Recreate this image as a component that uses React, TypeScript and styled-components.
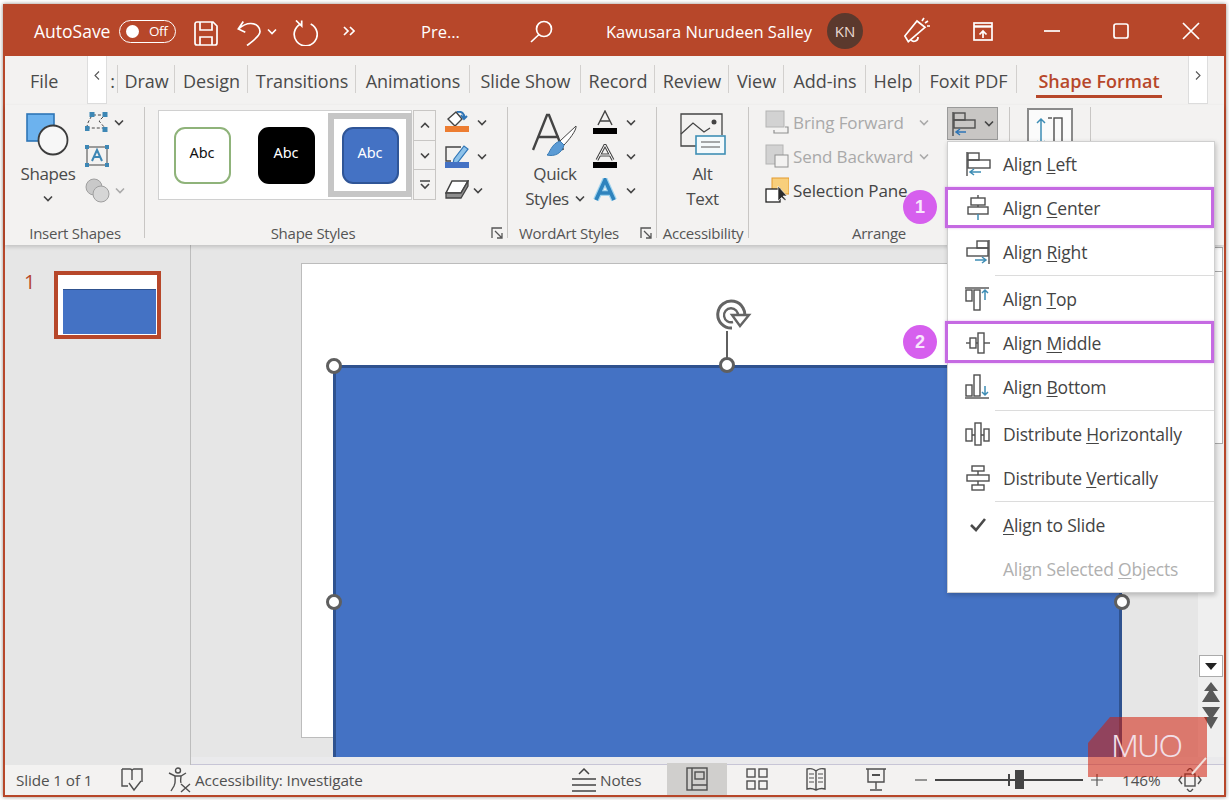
import React from "react";
import styled, { createGlobalStyle } from "styled-components";

const FONT = `"Open Sans", "Noto Sans", "Liberation Sans", sans-serif`;
const BRICK = "#B7472A";
const INK = "#444444";
const MUTED = "#A9A9A9";
const BLUE = "#4472C4";
const ARROW = "#3E8DB5";

const Global = createGlobalStyle`
  html, body { margin: 0; padding: 0; background: #fff; }
  body { font-family: ${FONT}; color: ${INK}; overflow: hidden; }
  * { box-sizing: border-box; }
  u { text-underline-offset: 2px; text-decoration-thickness: 1px; }
`;

const Page = styled.div`
  position: relative;
  width: 1229px;
  height: 800px;
  padding: 4px 3px 3px;
  overflow: hidden;
`;
const Win = styled.div`
  height: 793px;
  border: 2px solid ${BRICK};
  display: flex;
  flex-direction: column;
  background: #f3f2f1;
  box-shadow: 0 0 4px rgba(60, 40, 30, 0.55);
`;

/* ---------- title bar ---------- */
const TitleBar = styled.header`
  height: 50px;
  flex: none;
  background: ${BRICK};
  color: #fff;
  display: flex;
  align-items: center;
  font-size: 16.5px;
  white-space: nowrap;
`;
const Slot = styled.div<{ $w: number; $ml?: number; $center?: boolean; $pt?: number }>`
  width: ${(p) => p.$w}px;
  margin-left: ${(p) => p.$ml ?? 0}px;
  padding-top: ${(p) => p.$pt ?? 0}px;
  flex: none;
  display: flex;
  align-items: center;
  justify-content: ${(p) => (p.$center ? "center" : "flex-start")};
`;
const AppLabel = styled(Slot)`
  font-size: 17.5px;
`;
const Toggle = styled.div`
  width: 57px;
  height: 23px;
  border: 1.5px solid #fff;
  border-radius: 12px;
  display: flex;
  align-items: center;
  padding-left: 6px;
  font-size: 13.5px;
  letter-spacing: -0.4px;
`;
const ToggleDot = styled.span`
  width: 13px;
  height: 13px;
  border-radius: 50%;
  background: #fff;
  margin-right: 10px;
`;
const Avatar = styled.div`
  width: 36px;
  height: 36px;
  border-radius: 50%;
  background: #5b392d;
  color: #ead9d2;
  font-size: 15px;
  display: flex;
  align-items: center;
  justify-content: center;
`;

/* ---------- tabs ---------- */
const TabRow = styled.nav`
  height: 49px;
  flex: none;
  display: flex;
  align-items: stretch;
  font-size: 18px;
  letter-spacing: -0.04px;
  color: #4a4a4a;
  background: #f3f2f1;
  white-space: nowrap;
`;
const FileTab = styled.div`
  width: 82px;
  padding-left: 25px;
  display: flex;
  align-items: center;
  padding-top: 1px;
`;
const Scroller = styled.div<{ $ml?: number }>`
  width: 20px;
  height: 48px;
  margin-left: ${(p) => p.$ml ?? 0}px;
  background: #fff;
  border: 1px solid #dddddd;
  border-top: 0;
  display: flex;
  align-items: center;
  justify-content: center;
  padding-bottom: 8px;
  position: relative;
`;
const Tab = styled.div<{ $w: number }>`
  width: ${(p) => p.$w}px;
  display: flex;
  align-items: center;
  justify-content: center;
  position: relative;
  padding-top: 1px;
  &::after {
    content: "";
    position: absolute;
    right: 0;
    top: 9px;
    height: 28px;
    width: 1px;
    background: #d2d0ce;
  }
`;
const ActiveTab = styled.div`
  margin: 0 0 7px 19px;
  width: 126px;
  height: 42px;
  padding-top: 11px;
  border-bottom: 3px solid ${BRICK};
  color: ${BRICK};
  font-weight: 600;
  display: flex;
  align-items: center;
  justify-content: center;
  letter-spacing: 0;
`;

/* ---------- ribbon ---------- */
const Ribbon = styled.section`
  height: 140px;
  flex: none;
  padding-top: 2px;
  display: flex;
  background: #f3f2f1;
  position: relative;
  z-index: 2;
  box-shadow: 0 2px 4px rgba(0, 0, 0, 0.16);
  font-size: 17px;
  letter-spacing: -0.35px;
  white-space: nowrap;
`;
const Group = styled.div<{ $w: number }>`
  width: ${(p) => p.$w}px;
  height: 138px;
  flex: none;
  position: relative;
  display: flex;
  flex-direction: column;
  &::after {
    content: "";
    position: absolute;
    right: 0;
    top: 0;
    width: 1px;
    height: 131px;
    background: #c8c6c4;
  }
`;
const GroupBody = styled.div`
  flex: 1;
  min-height: 0;
  display: flex;
  align-items: flex-start;
`;
const GroupLabel = styled.div<{ $pr?: number }>`
  height: 24px;
  flex: none;
  padding-right: ${(p) => p.$pr ?? 0}px;
  display: flex;
  align-items: center;
  justify-content: center;
  font-size: 15px;
  letter-spacing: -0.25px;
  color: #555;
`;
const Launcher = styled.span`
  position: absolute;
  right: 5px;
  bottom: 6px;
  display: flex;
`;
const Large = styled.div<{ $w: number; $ml?: number }>`
  width: ${(p) => p.$w}px;
  margin-left: ${(p) => p.$ml ?? 0}px;
  flex: none;
  display: flex;
  flex-direction: column;
  align-items: center;
  color: #4a4a4a;
`;
const LargeIcon = styled.div`
  height: 54px;
  display: flex;
  align-items: flex-start;
  padding-top: 6px;
`;
const LargeLine = styled.div`
  height: 25px;
  display: flex;
  align-items: center;
  gap: 6px;
`;
const SmallCol = styled.div<{ $ml?: number }>`
  margin: -2px 0 0 ${(p) => p.$ml ?? 0}px;
  display: flex;
  flex-direction: column;
`;
const SmallRow = styled.div<{ $gap?: number }>`
  height: 34px;
  display: flex;
  align-items: center;
  gap: ${(p) => p.$gap ?? 6}px;
`;
const Gallery = styled.div`
  margin: 3px 0 0 13px;
  width: 254px;
  height: 90px;
  padding-left: 1px;
  background: #fff;
  border: 1px solid #d0d0d0;
  display: flex;
  align-items: center;
`;
const Style = styled.div<{ $sel?: boolean }>`
  width: 84px;
  height: 84px;
  flex: none;
  display: flex;
  align-items: center;
  justify-content: center;
  border: ${(p) => (p.$sel ? "6px solid #c6c6c6" : "0")};
`;
const Chip = styled.div<{ $bg: string; $line: string; $fg: string }>`
  width: 57px;
  height: 57px;
  border-radius: 11px;
  background: ${(p) => p.$bg};
  border: 2px solid ${(p) => p.$line};
  color: ${(p) => p.$fg};
  display: flex;
  align-items: center;
  justify-content: center;
  padding-bottom: 6px;
  font-family: "Noto Sans", sans-serif;
  font-size: 14.5px;
  letter-spacing: 0;
`;
const GalleryScroll = styled.div`
  margin: 3px 0 0 1px;
  width: 23px;
  height: 90px;
  display: flex;
  flex-direction: column;
  border: 1px solid #c8c6c4;
`;
const GalleryBtn = styled.div`
  flex: 1;
  display: flex;
  align-items: center;
  justify-content: center;
  & + & {
    border-top: 1px solid #c8c6c4;
  }
`;
const ArrangeCol = styled.div`
  width: 198px;
  flex: none;
  margin-top: -2px;
  padding-left: 16px;
  display: flex;
  flex-direction: column;
`;
const ArrangeRow = styled.div<{ $off?: boolean }>`
  height: 34px;
  display: flex;
  align-items: center;
  color: ${(p) => (p.$off ? MUTED : "#444")};
`;
const ArrangeText = styled.span`
  width: 126px;
  margin-left: 4px;
  flex: none;
  position: relative;
  letter-spacing: -0.1px;
`;
const AlignBtn = styled.div`
  width: 51px;
  height: 33px;
  flex: none;
  background: #c8c6c4;
  border: 1px solid #9a9a9a;
  display: flex;
  align-items: center;
  padding-left: 3px;
  gap: 7px;
`;
const HeightBox = styled.div`
  margin: 1px 0 0 17px;
  width: 46px;
  height: 40px;
  border: 2px solid #8a8a8a;
  background: #fbfbfb;
  display: flex;
  justify-content: center;
  padding-top: 6px;
`;

/* ---------- work area ---------- */
const Work = styled.main`
  flex: 1;
  min-height: 0;
  display: flex;
  background: #e6e6e6;
`;
const ThumbPane = styled.aside`
  width: 186px;
  flex: none;
  border-right: 1px solid #bdbdbd;
  padding: 26px 0 0 19px;
  display: flex;
  align-items: flex-start;
  gap: 16px;
`;
const ThumbNo = styled.span`
  color: ${BRICK};
  font-size: 20px;
  line-height: 22px;
  width: 14px;
`;
const Thumb = styled.div`
  width: 107px;
  height: 68px;
  border: 4px solid ${BRICK};
  background: #fff;
  padding: 14px 1px 1px 5px;
  display: flex;
`;
const ThumbShape = styled.div`
  flex: 1;
  background: ${BLUE};
  border-top: 1px solid #2f528f;
`;
const Editor = styled.div`
  flex: 1;
  min-width: 0;
  display: flex;
  flex-direction: column;
`;
const EditorTop = styled.div`
  flex: 1;
  min-height: 0;
  display: flex;
`;
const Viewport = styled.div`
  flex: 1;
  min-width: 0;
  position: relative;
  overflow: hidden;
`;
const Slide = styled.div`
  position: absolute;
  left: 110px;
  top: 18px;
  width: 790px;
  height: 475px;
  background: #fff;
  border: 1px solid #bcbcbc;
`;
const Shape = styled.div`
  position: absolute;
  left: 142px;
  top: 120px;
  width: 789px;
  height: 420px;
  background: ${BLUE};
  border: 3px solid #2f528f;
`;
const Handle = styled.span<{ $x: number; $y: number }>`
  position: absolute;
  left: ${(p) => p.$x - 8}px;
  top: ${(p) => p.$y - 8}px;
  width: 16px;
  height: 16px;
  border-radius: 50%;
  background: #fff;
  border: 3px solid #5f5f5f;
  z-index: 1;
`;
const Stem = styled.span`
  position: absolute;
  left: 535px;
  top: 86px;
  width: 2px;
  height: 34px;
  background: #5f5f5f;
`;
const RotateSpot = styled.span`
  position: absolute;
  left: 521px;
  top: 54px;
  display: flex;
`;
const VScroll = styled.div`
  width: 26px;
  flex: none;
  background: #efefef;
  display: flex;
  flex-direction: column;
  align-items: center;
  padding-top: 2px;
`;
const VBtn = styled.div`
  width: 24px;
  height: 25px;
  flex: none;
  background: #fff;
  border: 1px solid #ababab;
  display: flex;
  align-items: center;
  justify-content: center;
`;
const VThumb = styled.div`
  width: 24px;
  height: 172px;
  flex: none;
  background: #fff;
  border: 1px solid #ababab;
  border-top: 0;
  margin-bottom: 211px;
`;
const VDown = styled(VBtn)`
  height: 22px;
`;
const VJump = styled.div`
  margin-top: 5px;
  flex: none;
  display: flex;
`;
const HStrip = styled.div`
  height: 8px;
  flex: none;
  background: #eaeaec;
  border-bottom: 1px solid #c7c5d6;
`;

/* ---------- status bar ---------- */
const StatusBar = styled.footer`
  height: 30px;
  flex: none;
  background: #f3f2f1;
  display: flex;
  align-items: center;
  font-size: 15.3px;
  letter-spacing: -0.12px;
  color: #505050;
  white-space: nowrap;
`;
const ViewBtn = styled.div<{ $on?: boolean; $ml?: number }>`
  width: ${(p) => (p.$on ? 60 : 40)}px;
  height: 32px;
  margin-top: -2px;
  margin-left: ${(p) => p.$ml ?? 0}px;
  flex: none;
  background: ${(p) => (p.$on ? "#d0cfcd" : "transparent")};
  display: flex;
  align-items: center;
  justify-content: center;
`;
const ZoomTrack = styled.div`
  width: 148px;
  height: 2px;
  margin-left: 8px;
  flex: none;
  background: #444;
  position: relative;
`;
const ZoomTick = styled.span`
  position: absolute;
  left: 73px;
  top: -5px;
  width: 2px;
  height: 12px;
  background: #444;
`;
const ZoomThumb = styled.span`
  position: absolute;
  left: 80px;
  top: -9px;
  width: 9px;
  height: 19px;
  background: #444;
`;

/* ---------- menu ---------- */
const Menu = styled.div`
  position: absolute;
  left: 947px;
  top: 141px;
  width: 268px;
  height: 452px;
  background: #fff;
  border: 1px solid #cfcfcf;
  box-shadow: 1px 2px 5px rgba(0, 0, 0, 0.22);
  z-index: 5;
  font-size: 17.5px;
  letter-spacing: -0.2px;
  color: #444;
  white-space: nowrap;
`;
const MenuRow = styled.div<{ $off?: boolean; $sep?: boolean }>`
  position: relative;
  height: 44px;
  display: flex;
  align-items: center;
  color: ${(p) => (p.$off ? "#b0b0b0" : "#444")};
  margin-bottom: ${(p) => (p.$sep ? 3 : 0)}px;
  &::before {
    content: ${(p) => (p.$sep ? '""' : "none")};
    position: absolute;
    left: 47px;
    right: 0;
    bottom: -2px;
    height: 1px;
    background: #dcdcdc;
  }
`;
const MenuIcon = styled.span`
  width: 55px;
  flex: none;
  display: flex;
  justify-content: center;
  padding-left: 5px;
`;
const Highlight = styled.span<{ $top: number; $bottom: number }>`
  position: absolute;
  left: -3px;
  right: 0;
  top: ${(p) => p.$top}px;
  bottom: ${(p) => p.$bottom}px;
  border: 3px solid #c56ae2;
  box-shadow: 0 0 2px rgba(197, 106, 226, 0.5);
`;
const Badge = styled.span`
  position: absolute;
  left: -45px;
  top: 4px;
  width: 34px;
  height: 34px;
  border-radius: 50%;
  background: #d65fee;
  color: #f8e6fc;
  font-family: "Liberation Sans", sans-serif;
  font-size: 18px;
  font-weight: 700;
  display: flex;
  align-items: center;
  justify-content: center;
  letter-spacing: 0;
`;

/* ---------- watermark ---------- */
const Mark = styled.div`
  position: absolute;
  left: 1088px;
  top: 717px;
  width: 120px;
  height: 60px;
  z-index: 4;
`;
const MarkText = styled.span`
  position: absolute;
  left: 23px;
  top: 6px;
  font-family: "Noto Sans", sans-serif;
  font-weight: 300;
  font-size: 32px;
  line-height: 44px;
  letter-spacing: -1.8px;
  color: #f2dfe6;
`;

/* ---------- drawings ---------- */
type S = { children: React.ReactNode; w: number; h: number };
const Ico = ({ children, w, h }: S) => (
  <svg width={w} height={h} viewBox={`0 0 ${w} ${h}`} fill="none" style={{ display: "block", flex: "none" }}>
    {children}
  </svg>
);
const Chev = ({ c = "#444", dir = "down" }: { c?: string; dir?: "down" | "up" }) => (
  <Ico w={10} h={7}>
    <path d={dir === "up" ? "M1 5.5 5 1.5 9 5.5" : "M1 1.5 5 5.5 9 1.5"} stroke={c} strokeWidth={1.6} />
  </Ico>
);
const SideChev = ({ right }: { right?: boolean }) => (
  <Ico w={6} h={9}>
    <path d={right ? "M1 .5 5 4.500 1 8.500" : "M5 .5 1 4.500 5 8.500"} stroke="#555" strokeWidth={1.1} />
  </Ico>
);
const W = { stroke: "#fff", strokeWidth: 1.7 };
const SaveIc = () => (
  <Ico w={24} h={25}>
    <path d="M3 1h16l4 4v17a2 2 0 0 1-2 2H3a2 2 0 0 1-2-2V3a2 2 0 0 1 2-2Z" {...W} />
    <path d="M6 1v8h12V1M6 24v-8h12v8" {...W} />
  </Ico>
);
const UndoIc = () => (
  <Ico w={24} h={25}>
    <path d="M6.300.5 1.300 8l7 3.300M1.300 8C6 4 10 2.300 14 2.500c6 .3 9 4 9 8 0 5-8 10-13 14" {...W} />
  </Ico>
);
const RedoIc = () => (
  <Ico w={25} h={26}>
    <path d="M7.700 4A11.500 11.500 0 1 0 17.700 4" {...W} />
    <path d="M3 .5 8.700 6V.5" {...W} />
  </Ico>
);
const MoreIc = () => (
  <Ico w={12} h={10}>
    <path d="M1 1l4 4-4 4M7 1l4 4-4 4" {...W} />
  </Ico>
);
const SearchIc = () => (
  <Ico w={23} h={23}>
    <circle cx="14" cy="9" r="7.500" {...W} />
    <path d="M9 14.500 1 22" {...W} />
  </Ico>
);
const MegaphoneIc = () => (
  <Ico w={26} h={30}>
    <path d="M13 5 21 11.300 4.300 25.700 0.800 20Z" {...W} />
    <path d="M7 24a4 4 0 0 0 7-3" {...W} />
    <path d="M18 5l2-3M21 7l3-2M23 10h3" {...W} />
  </Ico>
);
const ShareIc = () => (
  <Ico w={20} h={19}>
    <rect x="1" y="1" width="18" height="17" {...W} />
    <path d="M1 4.500h18" stroke="#fff" strokeWidth={2.4} />
    <path d="M10 16V9M6.500 12.500 10 9l3.500 3.500" {...W} />
  </Ico>
);
const ShapesIc = () => (
  <Ico w={44} h={44}>
    <rect x="1" y="1" width="27" height="27" fill="#6cb2ee" stroke="#2e75b6" strokeWidth={1.6} />
    <circle cx="27" cy="27" r="14.500" fill="#f7f7f7" stroke="#3c3c3c" strokeWidth={1.8} />
  </Ico>
);
const node = "#3d87b5";
const EditIc = () => (
  <Ico w={24} h={20}>
    <path d="M2 16c0-6 3-8 5-13h13l-6 6 6 7Z" stroke="#444" strokeWidth={1} strokeDasharray="3 2" />
    {[[2,16],[7,2],[20,2],[20,17]].map(([x, y], i) => (
      <rect key={i} x={x - 2.5} y={y - 2} width={5} height={5} fill={node} />
    ))}
  </Ico>
);
const TextBoxIc = () => (
  <Ico w={24} h={22}>
    <rect x="2" y="2" width="20" height="18" stroke="#444" strokeWidth={1} />
    <path d="M7 16 12 5l5 11M9 12h6" stroke={node} strokeWidth={2} />
    {[[2,2],[22,2],[2,20],[22,20]].map(([x, y], i) => (
      <rect key={i} x={x - 2} y={y - 2} width={4} height={4} fill={node} />
    ))}
  </Ico>
);
const MergeIc = () => (
  <Ico w={25} h={25}>
    <circle cx="9" cy="9" r="8" fill="#c9c9c9" stroke="#9f9f9f" />
    <circle cx="16" cy="16" r="8" fill="#d6d6d6" stroke="#9f9f9f" />
  </Ico>
);
const FillIc = () => (
  <Ico w={24} h={22}>
    <path d="M11 1 3 8l7 7 7-7Z" fill="#fff" stroke="#444" strokeWidth={1.4} />
    <path d="M12 1c5-1 8 2 7 7M16 4l3 4 3-3" stroke="#2e75b6" strokeWidth={2} />
    <rect x="0" y="15" width="24" height="6" fill="#ed7d31" />
  </Ico>
);
const PenIc = () => (
  <Ico w={24} h={24}>
    <path d="M16 3H1v14h5" stroke="#444" strokeWidth={1.4} />
    <path d="M9 15 19 2l4 3-10 13-5 2Z" fill="#8dc2ea" stroke="#2e75b6" strokeWidth={1.2} />
    <rect x="0" y="18" width="24" height="6" fill="#4472c4" />
  </Ico>
);
const EraserIc = () => (
  <Ico w={24} h={20}>
    <path d="M7 1h16l-7 12H1Z" fill="#fff" stroke="#444" strokeWidth={1.5} />
    <path d="M1 13v5h15l7-12V1l-7 12H1Z" fill="#8e8e8e" stroke="#444" strokeWidth={1.3} />
  </Ico>
);
const QuickIc = () => (
  <Ico w={46} h={46}>
    <path d="M1 37 15 2h2l14 35M7 24h20" stroke="#444" strokeWidth={2.4} />
    <path d="M28 28 44 13c1 4-8 15-12 19Z" fill="#fff" stroke="#444" strokeWidth={1} />
    <path d="M15 42c3-2 4-11 13-14l4 4c-2 8-9 12-17 10Z" fill="#5b9bd5" stroke="#3b7cb5" />
  </Ico>
);
const TextFillIc = () => (
  <Ico w={24} h={24}>
    <path d="M5 15 12 1l7 14M7.500 11h9" stroke="#444" strokeWidth={1.4} />
    <rect y="18" width="24" height="6" fill="#000" />
  </Ico>
);
const TextLineIc = () => (
  <Ico w={24} h={24}>
    <path d="M4 16 12 1l8 15M6.500 11h11" stroke="#444" strokeWidth={3} />
    <path d="M4 16 12 1l8 15M6.500 11h11" stroke="#fff" strokeWidth={1} />
    <rect y="18" width="24" height="6" fill="#000" />
  </Ico>
);
const TextFxIc = () => (
  <Ico w={24} h={24}>
    <path d="M3 22 12 2l9 20M6.500 15h11" stroke="#9fd3ee" strokeWidth={6} />
    <path d="M3 22 12 2l9 20M6.500 15h11" stroke="#2e83bd" strokeWidth={3.600} />
  </Ico>
);
const AltIc = () => (
  <Ico w={46} h={42}>
    <path d="M16 33H1V1h41v21" stroke="#444" strokeWidth={1.3} />
    <path d="M1 21 13 10l11 9 6-4" stroke="#444" strokeWidth={1.3} />
    <circle cx="34" cy="9" r="2.500" fill="#444" />
    <rect x="16" y="23" width="29" height="18" fill="#f4fafc" stroke="#3f8fb5" strokeWidth={1.6} />
    <path d="M21 29h19M21 34h19" stroke="#555" strokeWidth={1.2} />
  </Ico>
);
const ForwardIc = () => (
  <Ico w={24} h={24}>
    <path d="M20 17h3v6H9v-3" stroke="#909090" strokeWidth={1.2} />
    <rect x="1" y="1" width="18" height="16" fill="#d2d2d2" stroke="#b4b4b4" />
  </Ico>
);
const BackwardIc = () => (
  <Ico w={24} h={24}>
    <rect x="1" y="1" width="17" height="19" fill="#d2d2d2" stroke="#b4b4b4" />
    <rect x="10" y="11" width="13" height="12" fill="#f3f2f1" stroke="#909090" />
  </Ico>
);
const SelPaneIc = () => (
  <Ico w={24} h={26}>
    <rect x="7" y="1" width="17" height="16" fill="#f8cf7c" stroke="#e49a2d" />
    <rect x="1" y="12" width="14" height="13" fill="#fff" stroke="#222" strokeWidth={1.3} />
    <path d="M13 9v15l3.500-3.500 3.500 3 1-1-3-3.500h4Z" fill="#2b2b2b" stroke="#fff" strokeWidth={0.6} />
  </Ico>
);
const G = { stroke: "#4f4f4f", strokeWidth: 1.4 };
const A = { stroke: ARROW, strokeWidth: 1.5 };
const AlignLeftIc = () => (
  <Ico w={26} h={26}>
    <path d="M2 1v24" {...G} />
    <rect x="3" y="2" width="11" height="7" {...G} />
    <rect x="3" y="9" width="22" height="8" {...G} />
    <path d="M16 21H5M9 18l-4 3 4 3" {...A} />
  </Ico>
);
const AlignCenterIc = () => (
  <Ico w={26} h={26}>
    <rect x="6" y="3" width="14" height="7" {...G} />
    <rect x="3" y="12" width="20" height="7" {...G} />
    <path d="M13 0v3M13 10v2" {...G} />
    <path d="M13 19v6" {...A} />
  </Ico>
);
const AlignRightIc = () => (
  <Ico w={26} h={26}>
    <path d="M24 1v24" {...G} />
    <rect x="12" y="2" width="11" height="7" {...G} />
    <rect x="2" y="9" width="21" height="8" {...G} />
    <path d="M10 21h11M17 18l4 3-4 3" {...A} />
  </Ico>
);
const AlignTopIc = () => (
  <Ico w={26} h={26}>
    <path d="M0 2h24" {...G} />
    <rect x="1" y="4" width="6" height="11" {...G} />
    <rect x="9" y="4" width="6" height="20" {...G} />
    <path d="M20 14V4M17 7l3-3 3 3" {...A} />
  </Ico>
);
const AlignMiddleIc = () => (
  <Ico w={26} h={26}>
    <path d="M1 13h24" {...G} />
    <rect x="5" y="8" width="6" height="10" fill="#fff" {...G} />
    <rect x="13" y="3" width="6" height="20" fill="#fff" {...G} />
  </Ico>
);
const AlignBottomIc = () => (
  <Ico w={26} h={26}>
    <path d="M0 24h24" {...G} />
    <rect x="1" y="11" width="6" height="11" {...G} />
    <rect x="9" y="1" width="6" height="21" {...G} />
    <path d="M20 12v9M17 18l3 3 3-3" {...A} />
  </Ico>
);
const DistHIc = () => (
  <Ico w={26} h={26}>
    <rect x="1" y="8" width="6" height="12" {...G} />
    <rect x="10" y="2" width="6" height="22" {...G} />
    <rect x="19" y="8" width="5" height="12" {...G} />
    <path d="M7 14h3M16 14h3" {...G} />
  </Ico>
);
const DistVIc = () => (
  <Ico w={26} h={26}>
    <rect x="7" y="1" width="12" height="5" {...G} />
    <rect x="2" y="10" width="22" height="6" {...G} />
    <rect x="7" y="20" width="12" height="5" {...G} />
    <path d="M13 6v4M13 16v4" {...G} />
  </Ico>
);
const CheckIc = () => (
  <Ico w={16} h={14}>
    <path d="M1 7l5 5L15 1" stroke="#4a4a4a" strokeWidth={2.6} />
  </Ico>
);
const AlignBtnIc = () => (
  <Ico w={26} h={26}>
    <path d="M2 1v24" {...G} />
    <rect x="3" y="2" width="11" height="7" {...G} />
    <rect x="3" y="9" width="21" height="8" {...G} />
    <path d="M15 21H5M9 18l-4 3 4 3" stroke="#2e75b6" strokeWidth={1.5} />
  </Ico>
);
const HeightIc = () => (
  <Ico w={28} h={30}>
    <path d="M5 3v26M1 7l4-4 4 4M1 25l4 4 4-4" {...A} />
    <path d="M12 2h4" {...G} />
    <rect x="18" y="2" width="8" height="28" {...G} />
  </Ico>
);
const LauncherIc = () => (
  <Ico w={12} h={12}>
    <path d="M1 11V1h10" stroke="#555" strokeWidth={1.3} />
    <path d="M4 4l7 7M11 6v5H6" stroke="#555" strokeWidth={1.3} />
  </Ico>
);
const SpinDownBar = () => (
  <Ico w={12} h={10}>
    <path d="M1 1h10M2 4l4 4 4-4" stroke="#444" strokeWidth={1.6} />
  </Ico>
);
const RotateIc = () => (
  <Ico w={40} h={34}>
    <path d="M20 29a13.500 13.500 0 1 1 12-9" stroke="#646464" strokeWidth={3} />
    <path d="M21 23a7 7 0 1 1 5-6" stroke="#646464" strokeWidth={2.4} />
    <path d="M20 16h17l-9 11Z" fill="#fff" stroke="#646464" strokeWidth={2.4} />
  </Ico>
);
const TriDown = () => (
  <Ico w={12} h={7}>
    <path d="M0 0h12L6 7Z" fill="#222" />
  </Ico>
);
const JumpUp = () => (
  <Ico w={18} h={20}>
    <path d="M9 0l7 9H2ZM9 6l9 14H0Z" fill="#595959" />
  </Ico>
);
const JumpDown = () => (
  <Ico w={18} h={22}>
    <path d="M0 0h18L9 13ZM2 10h14l-7 12Z" fill="#595959" />
  </Ico>
);
const BookIc = () => (
  <Ico w={22} h={24}>
    <path d="M1 1h8c1 0 2 1 2 2 0-1 1-2 2-2h8v13M1 1v17h6M11 3v9" {...G} />
    <path d="M8 15l5 7 7-9" {...G} />
  </Ico>
);
const AccIc = () => (
  <Ico w={24} h={26}>
    <circle cx="10" cy="3.500" r="2.500" {...G} />
    <path d="M1 6l6 3h6l5-3M7 9c0 5 1 6-1 10l-3 5M13 9c0 3-1 5 0 7" {...G} />
    <path d="M13 17l9 8M22 17l-9 8" {...G} />
  </Ico>
);
const NotesIc = () => (
  <Ico w={26} h={24}>
    <path d="M1 11h24M1 17h24M1 23h24M8 6l5-5 5 5" stroke="#444" strokeWidth={1.5} />
  </Ico>
);
const NormalIc = () => (
  <Ico w={22} h={24}>
    <rect x="1" y="1" width="20" height="22" {...G} />
    <path d="M6 1v22M6 18h15" {...G} />
    <rect x="9" y="5" width="9" height="7" {...G} />
  </Ico>
);
const SorterIc = () => (
  <Ico w={22} h={22}>
    <rect x="1" y="1" width="8" height="8" {...G} />
    <rect x="13" y="1" width="8" height="8" {...G} />
    <rect x="1" y="13" width="8" height="8" {...G} />
    <rect x="13" y="13" width="8" height="8" {...G} />
  </Ico>
);
const ReadIc = () => (
  <Ico w={20} h={24}>
    <path d="M10 4C8 2 4 1 1 2v20c3-1 7 0 9 1 2-1 6-2 9-1V2c-3-1-7 0-9 2Zm0 0v19" {...G} />
    <path d="M3 7h5M3 11h5M3 15h5M12 7h5M12 11h5M12 15h5" stroke="#4f4f4f" />
  </Ico>
);
const ShowIc = () => (
  <Ico w={20} h={24}>
    <path d="M0 2h20M2 2v13h16V2M10 15v7M4 23h12" {...G} />
    <path d="M6 8h8" stroke="#4f4f4f" strokeWidth={2} />
  </Ico>
);
const FitIc = () => (
  <Ico w={24} h={24}>
    <rect x="7" y="6" width="10" height="12" {...G} />
    <path d="M9 3l3-3 3 3M9 21l3 3 3-3M4 8l-3 4 3 4M20 8l3 4-3 4" {...G} />
  </Ico>
);

/* ---------- data ---------- */
const tabs: [string, number][] = [
  ["Draw", 57], ["Design", 73], ["Transitions", 108], ["Animations", 114], ["Slide Show", 111],
  ["Record", 74], ["Review", 74], ["View", 55], ["Add-ins", 82], ["Help", 54], ["Foxit PDF", 97],
];
const styleChips = [
  { bg: "#fff", line: "#8fb37a", fg: "#111", sel: false },
  { bg: "#000", line: "#000", fg: "#fff", sel: false },
  { bg: BLUE, line: "#2f5597", fg: "#fff", sel: true },
];
type Item = {
  pre: string; u: string; post: string; icon: React.ReactNode;
  sep?: boolean; off?: boolean; hl?: [number, number]; badge?: string;
};
const items: Item[] = [
  { pre: "Align ", u: "L", post: "eft", icon: <AlignLeftIc /> },
  { pre: "Align ", u: "C", post: "enter", icon: <AlignCenterIc />, hl: [1, 2], badge: "1" },
  { pre: "Align ", u: "R", post: "ight", icon: <AlignRightIc />, sep: true },
  { pre: "Align ", u: "T", post: "op", icon: <AlignTopIc /> },
  { pre: "Align ", u: "M", post: "iddle", icon: <AlignMiddleIc />, hl: [0, 2], badge: "2" },
  { pre: "Align ", u: "B", post: "ottom", icon: <AlignBottomIc />, sep: true },
  { pre: "Distribute ", u: "H", post: "orizontally", icon: <DistHIc /> },
  { pre: "Distribute ", u: "V", post: "ertically", icon: <DistVIc />, sep: true },
  { pre: "", u: "A", post: "lign to Slide", icon: <CheckIc /> },
  { pre: "Align Selected ", u: "O", post: "bjects", icon: null, off: true },
];

export default function App() {
  return (
    <Page>
      <Global />
      <Win>
        <TitleBar>
          <AppLabel $w={85} $ml={29}>AutoSave</AppLabel>
          <Toggle><ToggleDot />Off</Toggle>
          <Slot $w={24} $ml={18} $pt={4}><SaveIc /></Slot>
          <Slot $w={24} $ml={19} $pt={4}><UndoIc /></Slot>
          <Slot $w={22} $center><Chev c="#fff" /></Slot>
          <Slot $w={25} $ml={10} $pt={4}><RedoIc /></Slot>
          <Slot $w={62} $center><MoreIc /></Slot>
          <Slot $w={109} $ml={41}>Pre...</Slot>
          <Slot $w={23}><SearchIc /></Slot>
          <Slot $w={221} $ml={53}>Kawusara Nurudeen Salley</Slot>
          <Avatar>KN</Avatar>
          <Slot $w={26} $ml={41}><MegaphoneIc /></Slot>
          <Slot $w={20} $ml={43}><ShareIc /></Slot>
          <Slot $w={16} $ml={51}>
            <Ico w={16} h={2}><path d="M0 1h16" {...W} /></Ico>
          </Slot>
          <Slot $w={16} $ml={53}>
            <Ico w={16} h={16}><rect x="1" y="1" width="14" height="14" rx="2" {...W} /></Ico>
          </Slot>
          <Slot $w={18} $ml={53}>
            <Ico w={18} h={18}><path d="M1 1l16 16M17 1 1 17" {...W} /></Ico>
          </Slot>
        </TitleBar>

        <TabRow>
          <FileTab>File</FileTab>
          <Scroller><SideChev /></Scroller>
          <Tab $w={11}>:</Tab>
          {tabs.map(([t, w]) => <Tab key={t} $w={w}>{t}</Tab>)}
          <ActiveTab>Shape Format</ActiveTab>
          <Scroller $ml={26}><SideChev right /></Scroller>
        </TabRow>

        <Ribbon>
          <Group $w={140}>
            <GroupBody>
              <Large $w={60} $ml={13}>
                <LargeIcon><ShapesIc /></LargeIcon>
                <LargeLine>Shapes</LargeLine>
                <LargeLine><Chev /></LargeLine>
              </Large>
              <SmallCol $ml={7}>
                <SmallRow $gap={5}><EditIc /><Chev /></SmallRow>
                <SmallRow><TextBoxIc /></SmallRow>
                <SmallRow $gap={5}><MergeIc /><Chev c="#aaa" /></SmallRow>
              </SmallCol>
            </GroupBody>
            <GroupLabel>Insert Shapes</GroupLabel>
          </Group>

          <Group $w={363}>
            <GroupBody>
              <Gallery>
                {styleChips.map((c) => (
                  <Style key={c.bg} $sel={c.sel}>
                    <Chip $bg={c.bg} $line={c.line} $fg={c.fg}>Abc</Chip>
                  </Style>
                ))}
              </Gallery>
              <GalleryScroll>
                <GalleryBtn><Chev dir="up" /></GalleryBtn>
                <GalleryBtn><Chev /></GalleryBtn>
                <GalleryBtn><SpinDownBar /></GalleryBtn>
              </GalleryScroll>
              <SmallCol $ml={9}>
                <SmallRow $gap={8}><FillIc /><Chev /></SmallRow>
                <SmallRow $gap={8}><PenIc /><Chev /></SmallRow>
                <SmallRow $gap={4}><EraserIc /><Chev /></SmallRow>
              </SmallCol>
            </GroupBody>
            <GroupLabel $pr={27}>Shape Styles</GroupLabel>
            <Launcher><LauncherIc /></Launcher>
          </Group>

          <Group $w={149}>
            <GroupBody>
              <Large $w={72} $ml={11}>
                <LargeIcon><QuickIc /></LargeIcon>
                <LargeLine>Quick</LargeLine>
                <LargeLine>Styles <Chev /></LargeLine>
              </Large>
              <SmallCol $ml={2}>
                <SmallRow $gap={9}><TextFillIc /><Chev /></SmallRow>
                <SmallRow $gap={9}><TextLineIc /><Chev /></SmallRow>
                <SmallRow $gap={9}><TextFxIc /><Chev /></SmallRow>
              </SmallCol>
            </GroupBody>
            <GroupLabel $pr={27}>WordArt Styles</GroupLabel>
            <Launcher><LauncherIc /></Launcher>
          </Group>

          <Group $w={92}>
            <GroupBody>
              <Large $w={91}>
                <LargeIcon><AltIc /></LargeIcon>
                <LargeLine>Alt</LargeLine>
                <LargeLine>Text</LargeLine>
              </Large>
            </GroupBody>
            <GroupLabel>Accessibility</GroupLabel>
          </Group>

          <Group $w={261}>
            <GroupBody>
              <ArrangeCol>
                <ArrangeRow $off><ForwardIc /><ArrangeText>Bring Forward</ArrangeText><Chev c="#aaa" /></ArrangeRow>
                <ArrangeRow $off><BackwardIc /><ArrangeText>Send Backward</ArrangeText><Chev c="#aaa" /></ArrangeRow>
                <ArrangeRow><SelPaneIc /><ArrangeText>Selection Pane</ArrangeText></ArrangeRow>
              </ArrangeCol>
              <AlignBtn><AlignBtnIc /><Chev /></AlignBtn>
            </GroupBody>
            <GroupLabel $pr={1}>Arrange</GroupLabel>
          </Group>

          <Group $w={81}>
            <GroupBody>
              <HeightBox><HeightIc /></HeightBox>
            </GroupBody>
          </Group>
        </Ribbon>

        <Work>
          <ThumbPane>
            <ThumbNo>1</ThumbNo>
            <Thumb><ThumbShape /></Thumb>
          </ThumbPane>
          <Editor>
            <EditorTop>
              <Viewport>
                <Slide />
                <Shape />
                <Stem />
                <RotateSpot><RotateIc /></RotateSpot>
                <Handle $x={143} $y={121} />
                <Handle $x={536} $y={120} />
                <Handle $x={143} $y={357} />
                <Handle $x={931} $y={357} />
              </Viewport>
              <VScroll>
                <VBtn />
                <VThumb />
                <VDown><TriDown /></VDown>
                <VJump><JumpUp /></VJump>
                <VJump><JumpDown /></VJump>
              </VScroll>
            </EditorTop>
            <HStrip />
          </Editor>
        </Work>

        <StatusBar>
          <Slot $w={105} $ml={11}>Slide 1 of 1</Slot>
          <Slot $w={22}><BookIc /></Slot>
          <Slot $w={24} $ml={25}><AccIc /></Slot>
          <Slot $w={376} $ml={3}>Accessibility: Investigate</Slot>
          <Slot $w={26}><NotesIc /></Slot>
          <Slot $w={67} $ml={3}>Notes</Slot>
          <ViewBtn $on><NormalIc /></ViewBtn>
          <ViewBtn $ml={10}><SorterIc /></ViewBtn>
          <ViewBtn $ml={19}><ReadIc /></ViewBtn>
          <ViewBtn $ml={20}><ShowIc /></ViewBtn>
          <Slot $w={12} $ml={19}>
            <Ico w={12} h={2}><path d="M0 1h12" stroke="#555" strokeWidth={1.2} /></Ico>
          </Slot>
          <ZoomTrack><ZoomTick /><ZoomThumb /></ZoomTrack>
          <Slot $w={12} $ml={8}>
            <Ico w={12} h={12}><path d="M0 6h12M6 0v12" stroke="#555" strokeWidth={1.2} /></Ico>
          </Slot>
          <Slot $w={56} $ml={19}>146%</Slot>
          <Slot $w={24} $ml={0}><FitIc /></Slot>
        </StatusBar>
      </Win>

      <Menu>
        {items.map((it) => (
          <MenuRow key={it.u + it.post} $off={it.off} $sep={it.sep}>
            <MenuIcon>{it.icon}</MenuIcon>
            <span>{it.pre}<u>{it.u}</u>{it.post}</span>
            {it.hl && <Highlight $top={it.hl[0]} $bottom={it.hl[1]} />}
            {it.badge && <Badge>{it.badge}</Badge>}
          </MenuRow>
        ))}
      </Menu>

      <Mark>
        <Ico w={120} h={60}>
          <path d="M22 0H119V60H0V26Z" fill="rgba(210,30,10,0.55)" />
          <path d="M118 41 104 57" stroke="#f0e0dc" strokeWidth={2} />
        </Ico>
        <MarkText>MUO</MarkText>
      </Mark>
    </Page>
  );
}
